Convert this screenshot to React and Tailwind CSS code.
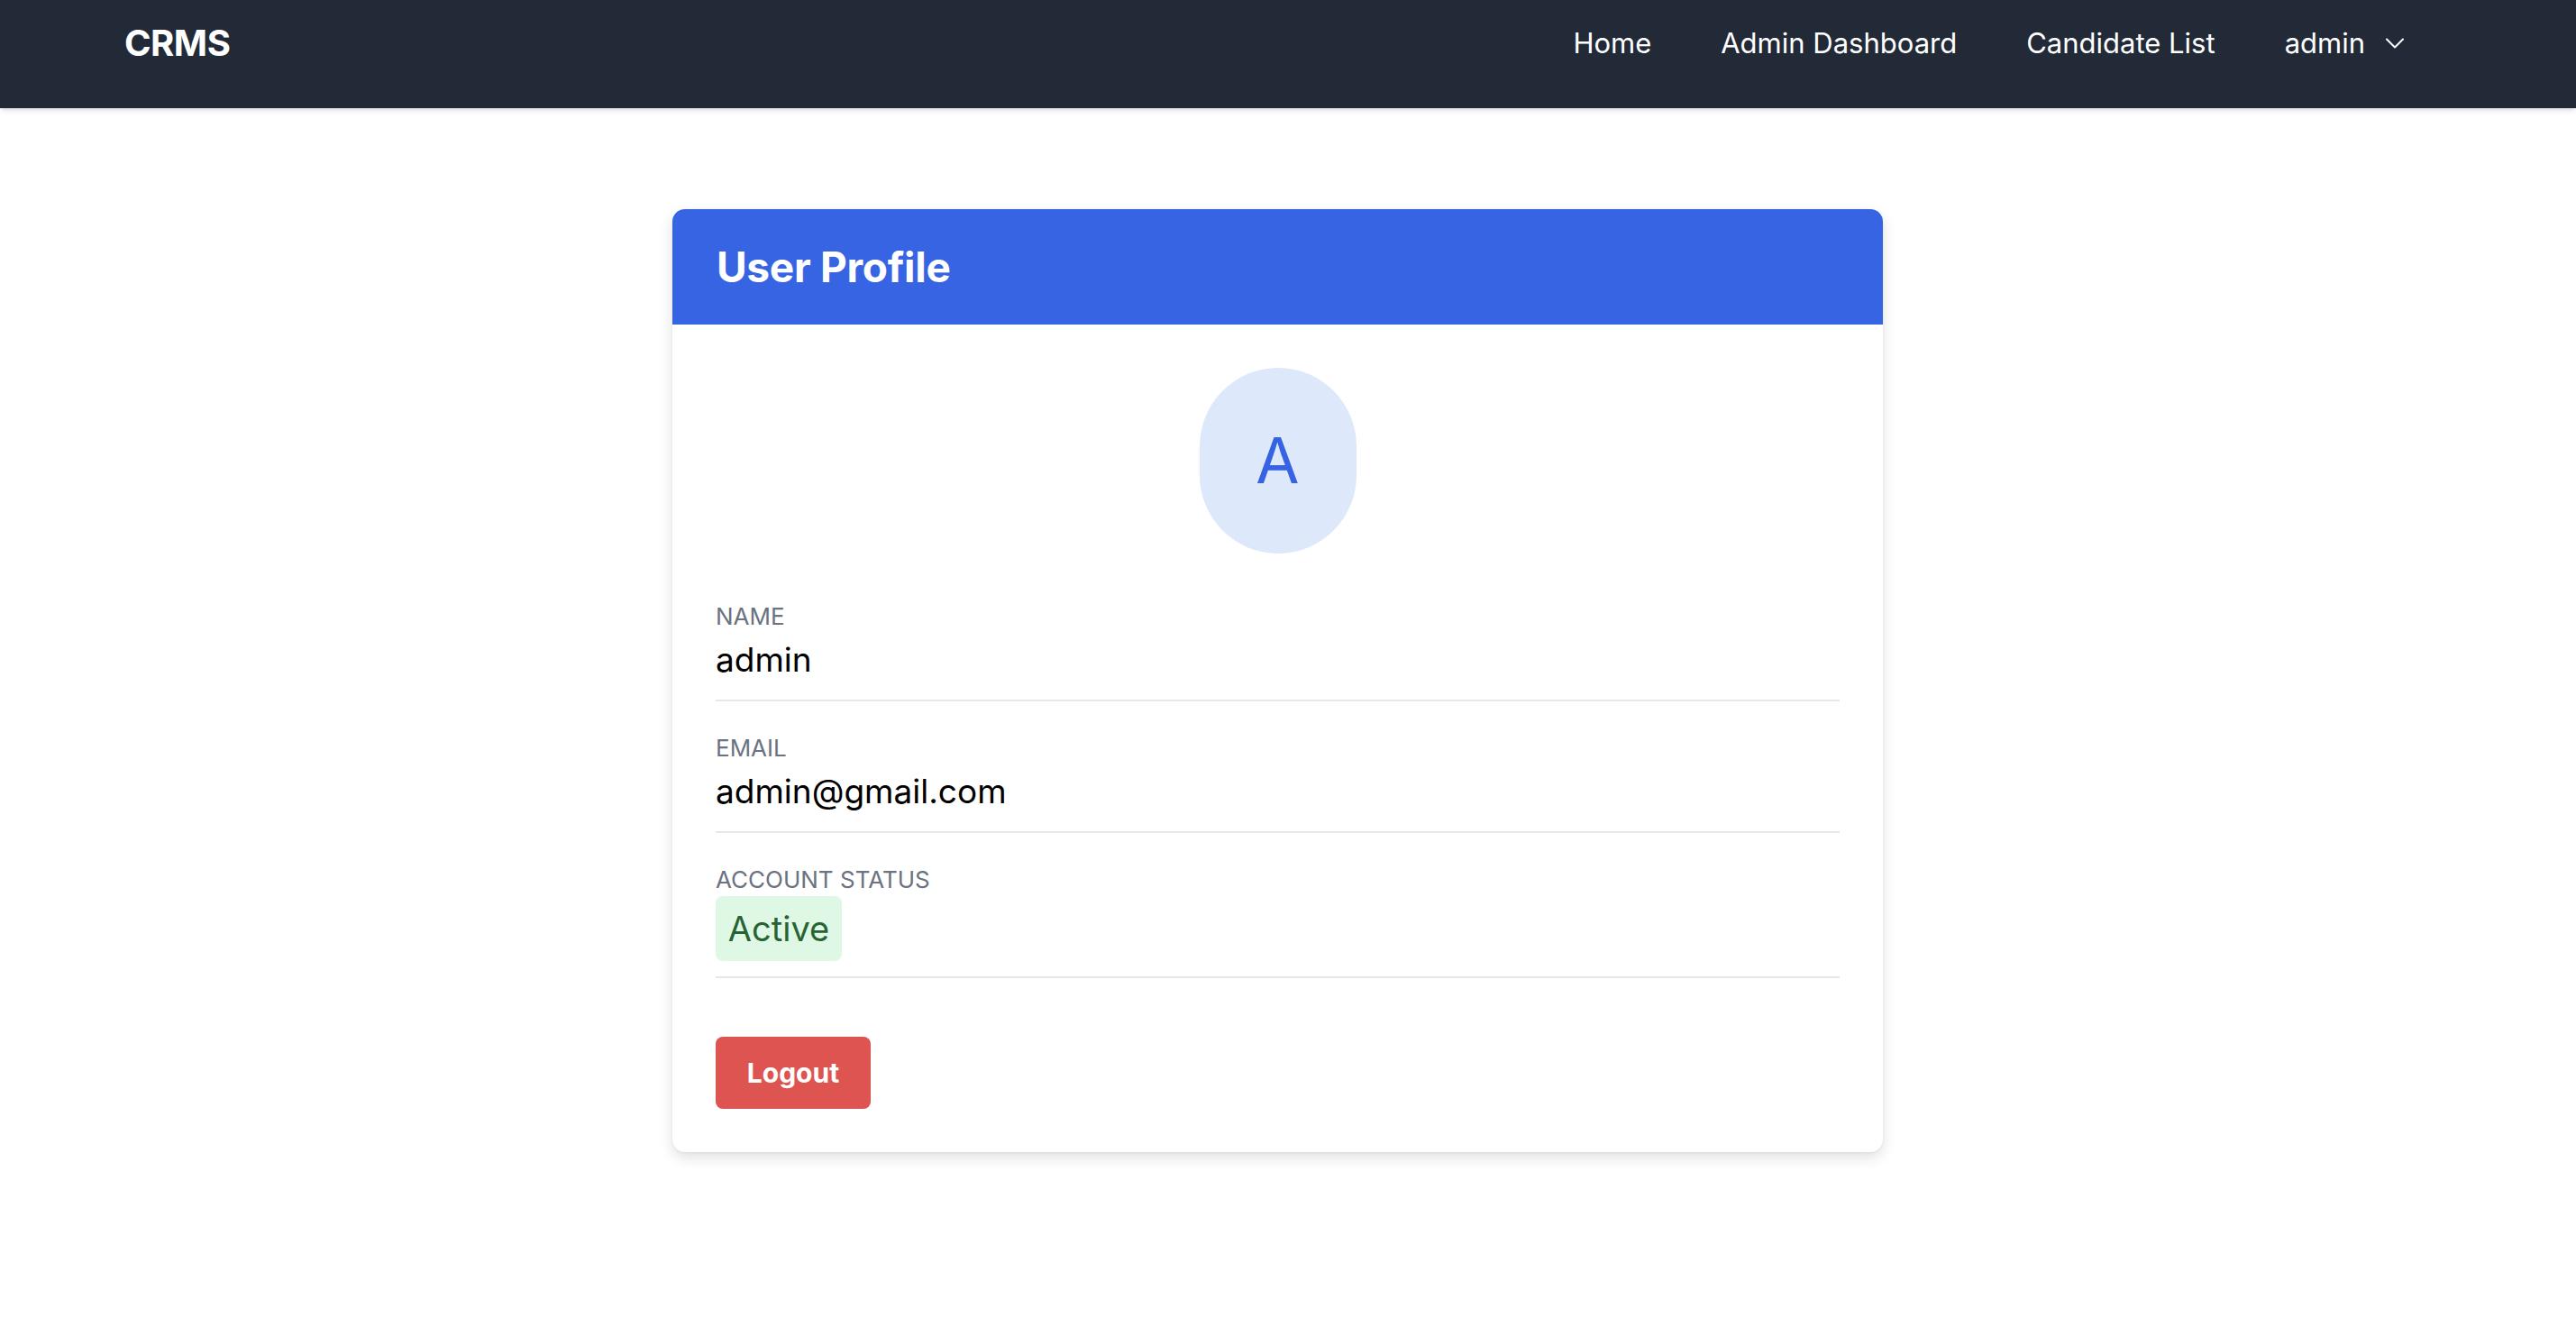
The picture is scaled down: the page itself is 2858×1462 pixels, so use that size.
const fields = [
  { label: "NAME", value: "admin" },
  { label: "EMAIL", value: "admin@gmail.com" },
];

const ChevronDown = () => (
  <svg width="20" height="12" viewBox="0 0 20 12" fill="none" className="ml-[23px]">
    <polyline points="1,1.5 10,10.5 19,1.5" stroke="white" strokeWidth="2" strokeLinecap="round" strokeLinejoin="round" />
  </svg>
);

const Navbar = () => {
  return (
    <nav className="h-[120px] bg-[#222a38] shadow-md">
      <div className="h-[96px] flex items-center justify-between pl-[138px] pr-[191px]">
        <span className="text-[40px] font-bold text-white tracking-[-0.5px]">CRMS</span>
        <div className="flex items-center gap-[77px] text-[31px] text-white">
          <a>Home</a>
          <a>Admin Dashboard</a>
          <a>Candidate List</a>
          <button className="flex items-center">
            admin
            <ChevronDown />
          </button>
        </div>
      </div>
    </nav>
  );
};

const UserProfile = () => {
  return (
    <div className="flex justify-center pr-[23px] pt-[112px]">
      <div className="w-[1343px] bg-white rounded-[14px] shadow-[0_6px_16px_rgba(0,0,0,0.12),0_1px_3px_rgba(0,0,0,0.06)] overflow-hidden">
        <div className="h-[128px] bg-[#3764e3] flex items-center px-[49px]">
          <h1 className="text-[46px] font-bold text-white tracking-[-0.3px]">User Profile</h1>
        </div>
        <div className="px-[48px] pt-[48px] pb-[48px]">
          <div className="flex justify-center">
            <div className="w-[174px] h-[206px] rounded-full bg-[#dee8fb] flex items-center justify-center">
              <span className="text-[70px] text-[#3563e3] leading-none">A</span>
            </div>
          </div>

          <div className="mt-[53px]">
            {fields.map((f) => (
              <div key={f.label} className="border-b-2 border-[#e6e7eb] pb-[19px] mb-[35px]">
                <p className="text-[26px] leading-[34px] text-[#6b7280]">{f.label}</p>
                <p className="mt-[6px] text-[37px] leading-[50px] text-black">{f.value}</p>
              </div>
            ))}
            <div className="border-b-2 border-[#e6e7eb] pb-[17px]">
              <p className="text-[26px] leading-[34px] text-[#6b7280]">ACCOUNT STATUS</p>
              <span className="mt-[1px] inline-flex items-center justify-center w-[140px] h-[72px] rounded-[8px] bg-[#dff8e5] text-[38px] text-[#276333]">
                Active
              </span>
            </div>
          </div>

          <button className="mt-[65px] w-[172px] h-[80px] rounded-[8px] bg-[#dd5450] text-white text-[30px] font-bold">
            Logout
          </button>
        </div>
      </div>
    </div>
  );
};

export default function App() {
  return (
    <div className="min-h-[1462px] bg-white font-['Inter',sans-serif]">
      <Navbar />
      <UserProfile />
    </div>
  );
}
